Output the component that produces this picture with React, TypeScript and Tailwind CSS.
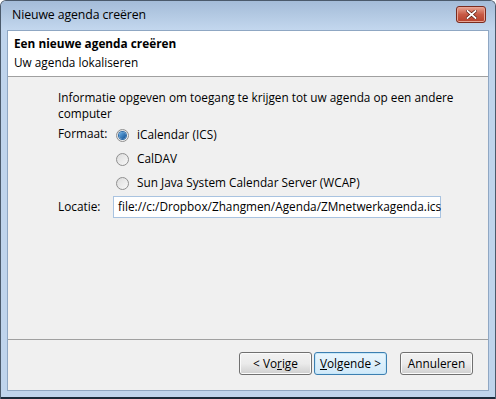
import React from 'react';

function Radio({ checked }: { checked?: boolean }) {
  return (
    <span className="relative flex h-[13px] w-[13px] items-center justify-center rounded-full border border-[#8f8f8f] bg-gradient-to-br from-[#dcdcdc] to-[#f8f8f8]">
      {checked && (
        <span className="h-[7px] w-[7px] rounded-full bg-gradient-to-br from-[#6fb4ea] to-[#0d4f91] shadow-[0_0_0_1px_#2e6ca8]" />
      )}
    </span>
  );
}

function Button({ children, primary }: { children: React.ReactNode; primary?: boolean }) {
  return (
    <button
      className={
        'h-[23px] w-[73px] shrink-0 rounded-[3px] border bg-gradient-to-b text-[11.8px] text-black ' +
        (primary
          ? 'border-[#3c7fb1] from-[#eaf6fd] to-[#d0e9f9] shadow-[inset_0_0_0_1px_#c6e7f8]'
          : 'border-[#707070] from-[#f2f2f2] via-[#ebebeb] to-[#cfcfcf] shadow-[inset_0_0_0_1px_#fbfbfb]')
      }
    >
      {children}
    </button>
  );
}

export default function App() {
  const font = { fontFamily: '"Open Sans", "Noto Sans", sans-serif' };
  return (
    <div
      className="flex h-[399px] w-[496px] flex-col overflow-hidden rounded-t-[6px] border-t border-l border-r border-[#4b5a6b] bg-[#bfd4ec] text-[11.8px] text-black"
      style={font}
    >
      {/* Title bar */}
      <div className="flex h-[29px] shrink-0 items-center bg-gradient-to-b from-[#a4bcd8] to-[#c3d7ee] pl-[11px] pr-[9px]">
        <span className="text-[12.3px] tracking-[-0.1px]">Nieuwe agenda creëren</span>
        <div className="ml-auto mt-[-2px] flex h-[17px] w-[30px] items-center justify-center rounded-[3px] border border-[#7a2b1e] bg-gradient-to-b from-[#e8a493] via-[#c75a45] to-[#b6402c] shadow-[inset_0_0_0_1px_#e7a596]">
          <svg width="11" height="9" viewBox="0 0 11 9">
            <path d="M1.5 1 L9.5 8 M9.5 1 L1.5 8" stroke="#5a1a10" strokeWidth="3.2" strokeLinecap="square" />
            <path d="M1.5 1 L9.5 8 M9.5 1 L1.5 8" stroke="#ffffff" strokeWidth="1.8" strokeLinecap="square" />
          </svg>
        </div>
      </div>

      {/* Client area */}
      <div className="mx-[6px] flex flex-1 flex-col border border-[#8fa7c3] bg-[#f0f0f0]">
        {/* Header */}
        <div className="flex h-[46px] shrink-0 flex-col border-b border-[#a0a0a0] bg-white pl-[6px] pt-[3px]">
          <span className="font-bold leading-[19px]">Een nieuwe agenda creëren</span>
          <span className="leading-[19px]">Uw agenda lokaliseren</span>
        </div>

        {/* Content */}
        <div className="flex flex-1 flex-col pl-[50px] pr-[20px] pt-[12px]">
          <p className="w-[400px] leading-[16px]">
            Informatie opgeven om toegang te krijgen tot uw agenda op een andere computer
          </p>
          <div className="mt-[1px] flex">
            <span className="w-[58px] pt-[3px] leading-[16px]">Formaat:</span>
            <div className="flex flex-col pt-[1px]">
              <label className="flex h-[24px] items-center gap-[8px]">
                <Radio checked />
                <span>iCalendar (ICS)</span>
              </label>
              <label className="flex h-[24px] items-center gap-[8px]">
                <Radio />
                <span>CalDAV</span>
              </label>
              <label className="flex h-[24px] items-center gap-[8px]">
                <Radio />
                <span>Sun Java System Calendar Server (WCAP)</span>
              </label>
            </div>
          </div>
          <div className="mt-[1px] flex items-center">
            <span className="w-[55px]">Locatie:</span>
            <div className="flex h-[22px] w-[328px] items-center border border-[#a9c3e0] bg-white pl-[4px]">
              file://c:/Dropbox/Zhangmen/Agenda/ZMnetwerkagenda.ics
            </div>
          </div>
        </div>

        {/* Footer */}
        <div className="flex h-[51px] shrink-0 items-start border-t border-[#a0a0a0] pt-[12px]">
          <div className="ml-auto flex pr-[15px]">
            <Button>
              &lt; Vo<span className="underline">r</span>ige
            </Button>
            <div className="ml-[2px]">
              <Button primary>
                <span className="underline">V</span>olgende &gt;
              </Button>
            </div>
            <div className="ml-[13px]">
              <Button>Annuleren</Button>
            </div>
          </div>
        </div>
      </div>

      <div className="h-[6px] shrink-0" />
      <div className="h-[2px] shrink-0 bg-[#1b2a3a]" />
    </div>
  );
}
